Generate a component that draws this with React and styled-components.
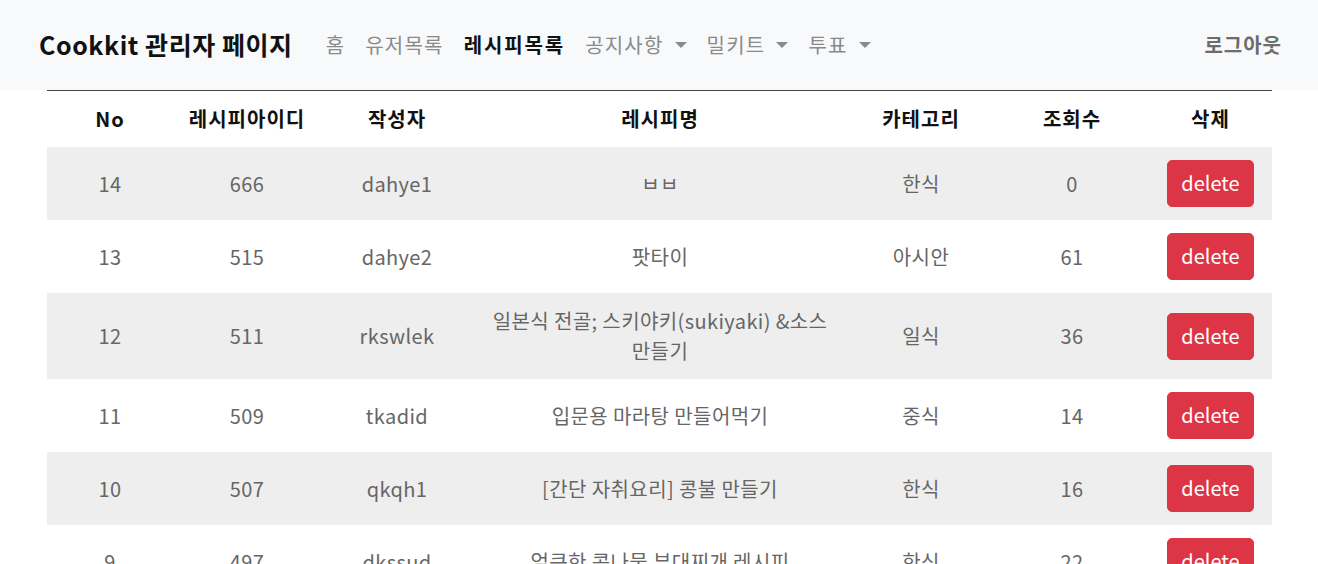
import React from 'react';
import styled, { createGlobalStyle } from 'styled-components';

const GlobalStyle = createGlobalStyle`
  html, body {
    margin: 0;
    padding: 0;
    background: #fff;
    overflow: hidden;
  }
  body {
    font-family: "Noto Sans CJK KR", "Noto Sans", sans-serif;
    font-size: 20px;
    line-height: 1.5;
    color: #212529;
  }
`;

const NavBar = styled.nav`
  height: 90px;
  background: #f8f9fa;
  display: flex;
  align-items: center;
  padding: 0 36px 0 39px;
  box-sizing: border-box;
`;

const Brand = styled.a`
  font-size: 25px;
  font-weight: 700;
  color: #111;
  letter-spacing: 0.55px;
  margin-right: 23px;
  white-space: nowrap;
`;

const NavList = styled.ul`
  display: flex;
  align-items: center;
  list-style: none;
  margin: 0;
  padding: 0;
  flex: 1;
`;

const NavLink = styled.li`
  padding: 0 10px;
  font-size: 20px;
  letter-spacing: ${p => (p.$active ? '1.9px' : '1.2px')};
  color: ${p => (p.$active ? '#111' : '#8a8a8a')};
  font-weight: ${p => (p.$active ? 700 : 400)};
  white-space: nowrap;
  display: flex;
  align-items: center;

  ${p => p.$dropdown && `
    &::after {
      content: "";
      display: inline-block;
      margin-left: 11px;
      border-top: 6px solid #8a8a8a;
      border-left: 6px solid transparent;
      border-right: 6px solid transparent;
      border-bottom: 0;
    }
  `}
`;

const Logout = styled.a`
  font-size: 20px;
  font-weight: 600;
  letter-spacing: 1px;
  color: #6c6c6c;
`;

const Main = styled.main`
  padding: 0 46px 0 47px;
`;

const Table = styled.table`
  width: 100%;
  table-layout: fixed;
  border-collapse: collapse;
  border-top: 1px solid #444;
`;

const HeadCell = styled.th`
  padding: 13px 8px;
  font-weight: 700;
  color: #111;
  text-align: center;
  letter-spacing: 1px;
`;

const Row = styled.tr`
  background: ${p => (p.$striped ? '#eeeeee' : '#fff')};
`;

const Cell = styled.td`
  padding: 13px 8px;
  text-align: center;
  vertical-align: middle;
  color: #666;
  letter-spacing: 0.4px;
`;

const DeleteButton = styled.button`
  font-family: inherit;
  font-size: 20px;
  line-height: 30px;
  padding: 7px 13px 8px;
  border: 1px solid #dc3545;
  border-radius: 5px;
  background: #dc3545;
  color: #fff;
  cursor: pointer;
`;

const nav = [
  { label: '홈' },
  { label: '유저목록' },
  { label: '레시피목록', active: true },
  { label: '공지사항', dropdown: true },
  { label: '밀키트', dropdown: true },
  { label: '투표', dropdown: true },
];

const widths = [126, 148, 152, 374, 148, 154, 123];
const headers = ['No', '레시피아이디', '작성자', '레시피명', '카테고리', '조회수', '삭제'];

const recipes = [
  { no: 14, id: 666, writer: 'dahye1', name: 'ㅂㅂ', category: '한식', views: 0 },
  { no: 13, id: 515, writer: 'dahye2', name: '팟타이', category: '아시안', views: 61 },
  { no: 12, id: 511, writer: 'rkswlek', name: '일본식 전골; 스키야키(sukiyaki) &소스 만들기', category: '일식', views: 36 },
  { no: 11, id: 509, writer: 'tkadid', name: '입문용 마라탕 만들어먹기', category: '중식', views: 14 },
  { no: 10, id: 507, writer: 'qkqh1', name: '[간단 자취요리] 콩불 만들기', category: '한식', views: 16 },
  { no: 9, id: 497, writer: 'dkssud', name: '얼큰한 콩나물 부대찌개 레시피', category: '한식', views: 22 },
];

export default function App() {
  return (
    <>
      <GlobalStyle />
      <NavBar>
        <Brand>Cookkit 관리자 페이지</Brand>
        <NavList>
          {nav.map(n => (
            <NavLink key={n.label} $active={n.active} $dropdown={n.dropdown}>
              {n.label}
            </NavLink>
          ))}
        </NavList>
        <Logout>로그아웃</Logout>
      </NavBar>
      <Main>
        <Table>
          <colgroup>
            {widths.map((w, i) => (
              <col key={i} style={{ width: w }} />
            ))}
          </colgroup>
          <thead>
            <tr>
              {headers.map(h => (
                <HeadCell key={h}>{h}</HeadCell>
              ))}
            </tr>
          </thead>
          <tbody>
            {recipes.map((r, i) => (
              <Row key={r.no} $striped={i % 2 === 0}>
                <Cell>{r.no}</Cell>
                <Cell>{r.id}</Cell>
                <Cell>{r.writer}</Cell>
                <Cell>{r.name}</Cell>
                <Cell>{r.category}</Cell>
                <Cell>{r.views}</Cell>
                <Cell>
                  <DeleteButton>delete</DeleteButton>
                </Cell>
              </Row>
            ))}
          </tbody>
        </Table>
      </Main>
    </>
  );
}
